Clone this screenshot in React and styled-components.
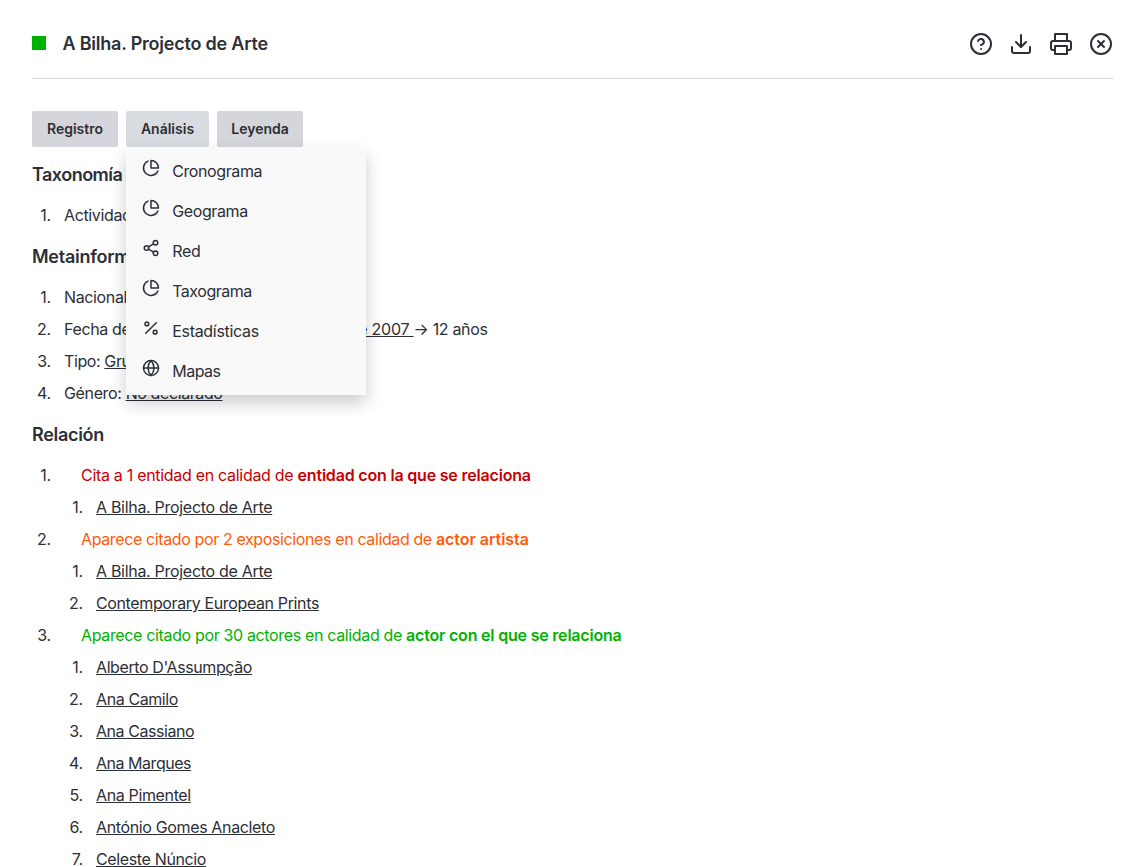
import React from "react";
import styled, { createGlobalStyle } from "styled-components";
import { FiHelpCircle, FiDownload, FiPrinter, FiXCircle, FiPieChart, FiShare2, FiPercent, FiGlobe } from "react-icons/fi";

const GlobalStyle = createGlobalStyle`
  *, *::before { box-sizing: border-box; }
  html, body { margin: 0; height: 100%; overflow: hidden; background: #fff; }
  body { font-family: Inter, "Liberation Sans", sans-serif; font-size: 16px; line-height: 32px; color: #2c2f36; }
`;

const Page = styled.main`
  padding: 0 32px;
  height: 867px;
  overflow: hidden;
`;
const Header = styled.header`
  display: flex;
  align-items: center;
  height: 79px;
  padding-top: 9px;
  border-bottom: 1px solid #d1d1d9;
`;
const Swatch = styled.span`
  width: 14px;
  height: 14px;
  margin: 0 16.5px 2px 0;
  background: #00b200;
`;
const Title = styled.h1`
  flex: 1;
  margin: 0;
  font-size: 18px;
  font-weight: 600;
  letter-spacing: -0.22px;
`;
const Tools = styled.div`
  display: flex;
  gap: 16px;
  svg { width: 24px; height: 24px; display: block; }
`;
const Bar = styled.nav`
  display: flex;
  gap: 8px;
  margin-top: 32px;
`;
const MenuAnchor = styled.div`
  position: relative;
`;
const Button = styled.button`
  width: ${(p) => p.$width}px;
  height: 36px;
  padding: 0;
  border: 0;
  border-radius: 2px;
  background: ${(p) => (p.$active ? "#d8dbe0" : "#d5d6db")};
  color: inherit;
  font: 600 14px/36px Inter, sans-serif;
`;
const Menu = styled.div`
  position: absolute;
  top: 36px;
  left: 0;
  width: 240px;
  padding: 4px 16px;
  background: #f9f9f9;
  box-shadow: 0 8px 16px rgba(0, 0, 0, 0.2);
`;
const MenuItem = styled.div`
  display: flex;
  height: 40px;
  line-height: 40px;
  svg { width: 18px; height: 18px; margin: 8px 12.2px 0 0; }
`;
const Heading = styled.h2`
  margin: 0 0 8px;
  font-size: 18px;
  font-weight: 600;
  line-height: 32px;
  letter-spacing: ${(p) => p.$track || 0}px;
`;
const Section = styled.section`
  padding-top: ${(p) => p.$top || 10}px;
`;
const List = styled.ol`
  margin: 0;
  padding-left: 32px;
  list-style: none;
  counter-reset: entry;
`;
const Entry = styled.li`
  counter-increment: entry;
  white-space: nowrap;
  &::before {
    content: counter(entry) ".";
    display: inline-block;
    width: 32px;
    margin-left: -32px;
    padding-right: 13px;
    text-align: right;
    letter-spacing: -0.2px;
  }
`;
const Text = styled.span`
  letter-spacing: ${(p) => p.$track ?? -0.36}px;
`;
const Link = styled.a`
  text-decoration: underline;
  letter-spacing: ${(p) => p.$track ?? -0.36}px;
`;
const Cite = styled.span`
  margin-left: 17px;
  color: ${(p) => p.$tone};
`;
const Role = styled.strong`
  font-weight: 600;
  letter-spacing: ${(p) => p.$track || 0}px;
`;

const MENU = [
  [FiPieChart, "Cronograma", -0.4],
  [FiPieChart, "Geograma", -0.38],
  [FiShare2, "Red", -0.3],
  [FiPieChart, "Taxograma", -0.48],
  [FiPercent, "Estadísticas", -0.3],
  [FiGlobe, "Mapas", -0.5],
];
const RELATIONS = [
  {
    tone: "#c80000", text: "Cita a 1 entidad en calidad de", track: -0.3, role: "entidad con la que se relaciona", roleTrack: -0.19,
    links: [["A Bilha. Projecto de Arte", -0.3]],
  },
  {
    tone: "#ff5a0a", text: "Aparece citado por 2 exposiciones en calidad de", track: -0.38, role: "actor artista", roleTrack: -0.04,
    links: [["A Bilha. Projecto de Arte", -0.3], ["Contemporary European Prints", -0.37]],
  },
  {
    tone: "#00b200", text: "Aparece citado por 30 actores en calidad de", track: -0.35, role: "actor con el que se relaciona", roleTrack: -0.2,
    links: [
      ["Alberto D'Assumpção", -0.4],
      ["Ana Camilo", -0.4],
      ["Ana Cassiano", -0.44],
      ["Ana Marques", -0.47],
      ["Ana Pimentel", -0.36],
      ["António Gomes Anacleto", -0.36],
      ["Celeste Núncio", -0.36],
    ],
  },
];

export default function App() {
  return (
    <Page>
      <GlobalStyle />
      <Header>
        <Swatch />
        <Title>A Bilha. Projecto de Arte</Title>
        <Tools><FiHelpCircle /><FiDownload /><FiPrinter /><FiXCircle /></Tools>
      </Header>
      <Bar>
        <Button $width={86}>Registro</Button>
        <MenuAnchor>
          <Button $width={83} $active>Análisis</Button>
          <Menu>
            {MENU.map(([Icon, label, track]) => (
              <MenuItem key={label}><Icon /><Text $track={track}>{label}</Text></MenuItem>
            ))}
          </Menu>
        </MenuAnchor>
        <Button $width={86}>Leyenda</Button>
      </Bar>
      <Section $top={12}>
        <Heading $track={-0.52}>Taxonomía</Heading>
        <List><Entry><Text>Actividad</Text></Entry></List>
      </Section>
      <Section>
        <Heading $track={-0.26}>Metainformación</Heading>
        <List>
          <Entry><Text>Nacionalidad</Text></Entry>
          <Entry>
            <Text>Fecha de nacimiento: </Text>
            <Link $track={-0.24}>11 de septiembre de 2007 </Link>
            <Text $track={-0.34}>→ 12 años</Text>
          </Entry>
          <Entry><Text $track={-0.4}>Tipo: </Text><Link>Grupo</Link></Entry>
          <Entry><Text>Género: </Text><Link $track={-0.4}>No declarado</Link></Entry>
        </List>
      </Section>
      <Section>
        <Heading $track={-0.3}>Relación</Heading>
        <List>
          {RELATIONS.map((r) => (
            <Entry key={r.tone}>
              <Cite $tone={r.tone}>
                <Text $track={r.track}>{r.text} </Text>
                <Role $track={r.roleTrack}>{r.role}</Role>
              </Cite>
              <List>
                {r.links.map(([name, track]) => <Entry key={name}><Link $track={track}>{name}</Link></Entry>)}
              </List>
            </Entry>
          ))}
        </List>
      </Section>
    </Page>
  );
}
